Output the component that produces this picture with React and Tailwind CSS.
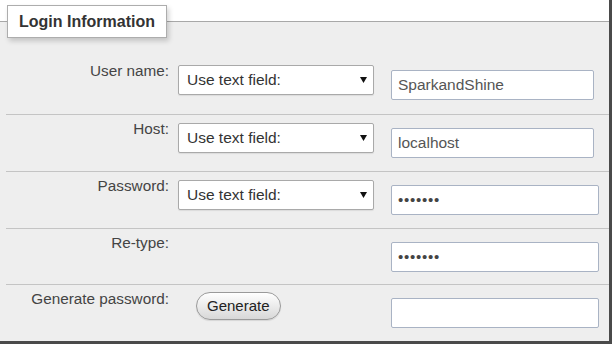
// App.jsx

const font = { fontFamily: '"Liberation Sans", Arial, sans-serif' };

const SelectBox = () => (
  <div className="w-[196px] h-[30px] bg-white border border-[#a9a9a9] rounded-[2px] flex items-center justify-between pl-[8px] pr-[6px] text-[15.5px] text-[#333] shadow-[0_1px_1px_rgba(0,0,0,0.08)]">
    <span>Use text field:</span>
    <svg width="7" height="6" viewBox="0 0 7 6">
      <polygon points="0,0 7,0 3.5,6" fill="#111" />
    </svg>
  </div>
);

const TextBox = ({ value, wide, dots }) => (
  <div
    className={`${wide ? 'w-[208px]' : 'w-[203px]'} h-[30px] bg-white border border-[#a9b3c4] rounded-[2px] flex items-center pl-[6px] text-[15.5px] text-[#555]`}
  >
    {dots ? <span className="text-[15px] tracking-[0.75px] text-[#444]">•••••••</span> : value}
  </div>
);

const Row = ({ label, first, last, children, input }) => (
  <div
    className={`flex items-start ml-[6px] ${first ? 'h-[93px] pt-[40px]' : last ? 'flex-1 pt-[5px]' : 'h-[57px] pt-[5px]'} ${last ? '' : 'border-b border-[#c4c4c4]'}`}
  >
    <div className="w-[163px] text-right text-[15.3px] leading-[17px] text-[#444]">{label}</div>
    <div className="w-[196px] ml-[9px] mt-[3px]">{children}</div>
    <div className="ml-[17px] mt-[8px]">{input}</div>
  </div>
);

export default function App() {
  return (
    <div className="w-[613px] h-[346px] bg-white overflow-hidden" style={font}>
      <div className="w-[612px] h-[344px] border-r-[3px] border-b-[3px] border-[#4a4a4a] flex flex-col">
        <div className="relative h-[22px] bg-white border-b border-[#a8a8a8] shrink-0">
          <div className="absolute left-[7px] top-[5px] h-[33px] w-[160px] flex items-center justify-center bg-white border border-[#adadad] shadow-[2px_3px_5px_rgba(0,0,0,0.18)] text-[16px] font-bold text-[#333] z-10">
            Login Information
          </div>
        </div>
        <div className="flex-1 bg-[#eeeeee] flex flex-col">
          <Row label="User name:" first input={<TextBox value="SparkandShine" />}>
            <SelectBox />
          </Row>
          <Row label="Host:" input={<TextBox value="localhost" />}>
            <SelectBox />
          </Row>
          <Row label="Password:" input={<TextBox wide dots />}>
            <SelectBox />
          </Row>
          <div className="flex items-start ml-[6px] h-[56px] pt-[5px] border-b border-[#c4c4c4]">
            <div className="w-[163px] text-right text-[15.3px] leading-[17px] text-[#444]">Re-type:</div>
            <div className="ml-[222px] mt-[8px]">
              <TextBox wide dots />
            </div>
          </div>
          <Row label="Generate password:" last input={<TextBox wide />}>
            <button className="ml-[18px] mt-[-1px] h-[28px] px-[10px] rounded-full border border-[#9a9a9a] bg-gradient-to-b from-white to-[#d8d8d8] text-[15px] text-[#222] shadow-[0_1px_1px_rgba(0,0,0,0.1)]">
              Generate
            </button>
          </Row>
        </div>
      </div>
    </div>
  );
}
